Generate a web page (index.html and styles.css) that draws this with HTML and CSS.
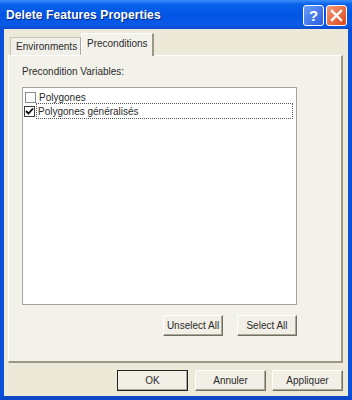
FILE: index.html
```html
<!DOCTYPE html>
<html lang="fr">

<head>
    <meta charset="utf-8">
    <title>Delete Features Properties</title>
    <link rel="stylesheet" href="styles.css">
</head>

<body>

    <div class="window">
        <div class="titlebar">
            <h1>Delete Features Properties</h1>
            <div class="title-buttons">
                <span class="tb-btn tb-help">?</span>
                <span class="tb-btn tb-close">
                    <svg width="13" height="13" viewBox="0 0 13 13">
                        <path d="M2 2 L11 11 M11 2 L2 11" stroke="#fff" stroke-width="2.4" stroke-linecap="square" fill="none" />
                    </svg>
                </span>
            </div>
        </div>

        <div class="content">
            <!-- Tabs -->
            <div class="tabs">
                <span class="tab">Environments</span>
                <span class="tab tab-active">Preconditions</span>
            </div>

            <div class="panel">
                <p class="panel-label">Precondition Variables:</p>
                <ul class="list">
                    <li class="item">
                        <span class="check"></span>
                        <span class="item-text">Polygones</span>
                    </li>
                    <li class="item item-focus">
                        <span class="check checked">
                            <svg width="9" height="9" viewBox="0 0 9 9">
                                <path d="M1 4 L3.5 6.5 L8 1.5" stroke="#000" stroke-width="1.8" fill="none" />
                            </svg>
                        </span>
                        <span class="item-text">Polygones généralisés</span>
                    </li>
                </ul>
                <div class="panel-buttons">
                    <button type="button">Unselect All</button>
                    <button type="button">Select All</button>
                </div>
            </div>

            <div class="footer">
                <button type="button" class="default">OK</button>
                <button type="button">Annuler</button>
                <button type="button">Appliquer</button>
            </div>
        </div>
    </div>

</body>

</html>
```

FILE: styles.css
```css
* {
    margin: 0;
    padding: 0;
    box-sizing: border-box;
}

body {
    font-family: "Liberation Sans", Arial, sans-serif;
    font-size: 10px;
    color: #2a2a2a;
    background: #fff;
}

/** Window frame **/
.window {
    width: 352px;
    height: 400px;
    display: flex;
    flex-direction: column;
    background: #0a5bdc;
    border-left: 4px solid #0a50d8;
    border-right: 4px solid #0a50d8;
    border-bottom: 4px solid #0a48c8;
}

.titlebar {
    height: 29px;
    margin: 0 -4px;
    padding: 0 5px 0 6px;
    display: flex;
    align-items: center;
    justify-content: space-between;
    background: linear-gradient(#3a8cf8 0%, #0a62ea 15%, #0055e5 50%, #0a5ae6 85%, #0a4cd0 100%);
}

.titlebar h1 {
    font-size: 12px;
    font-weight: bold;
    color: #fff;
    text-shadow: 1px 1px 0 #0a2a88;
    letter-spacing: 0.1px;
}

.title-buttons {
    display: flex;
    gap: 2px;
    margin-top: 1px;
}

.tb-btn {
    width: 21px;
    height: 21px;
    border: 1px solid #fff;
    border-radius: 3px;
    display: flex;
    align-items: center;
    justify-content: center;
    color: #fff;
    font-weight: bold;
    font-size: 15px;
}

.tb-help {
    background: linear-gradient(135deg, #6a9cf8, #2a5ee0);
}

.tb-close {
    background: linear-gradient(135deg, #f29a78, #e0461c);
}

/** Dialog body **/
.content {
    flex: 1;
    display: flex;
    flex-direction: column;
    background: #ece9d8;
    padding: 4px 5px 0 4px;
}

.tabs {
    display: flex;
    align-items: flex-end;
    padding-left: 2px;
    height: 22px;
}

.tab {
    height: 18px;
    padding: 0 5px;
    display: flex;
    align-items: center;
    background: #f1f0e8;
    border: 1px solid #c8c5b4;
    border-bottom: 0;
    border-right-color: #a9a695;
    width: 71px;
}

.tab-active {
    height: 23px;
    width: 73px;
    margin-bottom: -1px;
    position: relative;
    z-index: 1;
    background: #f3f2ea;
    border-color: #fff;
    border-right: 2px solid #9a9786;
    padding-bottom: 3px;
}

.panel {
    height: 308px;
    background: #f3f2ea;
    border: 1px solid #fff;
    border-right: 2px solid #9a9786;
    border-bottom: 2px solid #9a9786;
    padding: 10px 44px 0 13px;
    display: flex;
    flex-direction: column;
}

.panel-label {
    height: 12px;
    line-height: 12px;
}

.list {
    list-style: none;
    margin-top: 9px;
    height: 218px;
    background: #fff;
    border: 1px solid #a5a5a0;
    padding: 2px 4px 0 2px;
}

.item {
    height: 14px;
    display: flex;
    align-items: center;
    gap: 2px;
}

.item-focus {
    outline: 1px dotted #555;
    outline-offset: 0;
    margin-left: 12px;
}

.item-focus .check {
    margin-left: -13px;
}

.check {
    width: 11px;
    height: 11px;
    border: 1px solid #8a8a8a;
    background: #fff;
    display: flex;
    align-items: center;
    justify-content: center;
    flex: none;
}

.checked {
    border-color: #404040;
}

.item-text {
    padding-left: 1px;
}

/** Buttons **/
button {
    font-family: "Liberation Sans", Arial, sans-serif;
    font-size: 10px;
    color: #2a2a2a;
    height: 21px;
    background: #f1efe6;
    border: 1px solid;
    border-color: #fff #716f64 #716f64 #fff;
    box-shadow: inset -1px -1px 0 #aca899;
}

.panel-buttons {
    display: flex;
    justify-content: flex-end;
    gap: 14px;
    margin-top: 10px;
}

.panel-buttons button {
    width: 60px;
}

.footer {
    display: flex;
    justify-content: flex-end;
    gap: 6px;
    margin-top: 7px;
}

.footer button {
    width: 71px;
}

.footer .default {
    outline: 1px solid #222;
    outline-offset: -1px;
    margin-right: 1px;
}
```
